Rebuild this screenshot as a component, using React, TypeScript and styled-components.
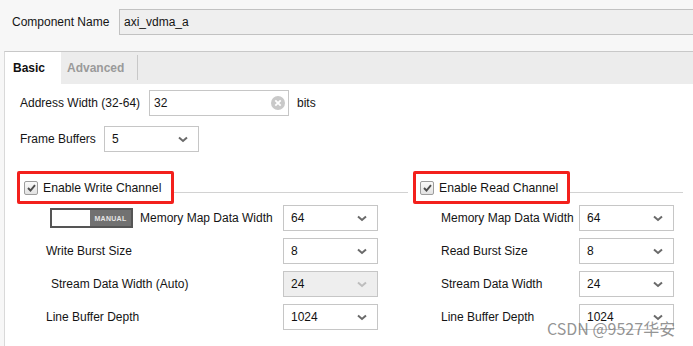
import styled, { createGlobalStyle } from "styled-components";

const GlobalStyle = createGlobalStyle`
  html, body {
    margin: 0;
    padding: 0;
    background: #ffffff;
  }
  body {
    font-family: "Liberation Sans", Arial, sans-serif;
    font-size: 12px;
    color: #141414;
  }
  * {
    box-sizing: border-box;
  }
`;

const Chevron = ({ disabled }: { disabled?: boolean }) => (
  <svg width="10" height="7" viewBox="0 0 10 7">
    <path
      d="M1 1.5 L5 5 L9 1.5"
      fill="none"
      stroke={disabled ? "#bdbdbd" : "#6a6a6a"}
      strokeWidth="2"
    />
  </svg>
);

const ClearIcon = () => (
  <svg width="14" height="14" viewBox="0 0 14 14">
    <circle cx="7" cy="7" r="7" fill="#c9c9c9" />
    <path d="M4.3 4.3 L9.7 9.7 M9.7 4.3 L4.3 9.7" stroke="#fff" strokeWidth="1.8" />
  </svg>
);

const CheckIcon = () => (
  <svg width="9" height="8" viewBox="0 0 9 8">
    <path d="M1 4 L3.5 6.5 L8 1.2" fill="none" stroke="#4d4d4d" strokeWidth="1.9" />
  </svg>
);

const writeRows = [
  { label: "Memory Map Data Width", value: "64", manual: true },
  { label: "Write Burst Size", value: "8" },
  { label: "Stream Data Width (Auto)", value: "24", disabled: true, indent: 5 },
  { label: "Line Buffer Depth", value: "1024" },
];

const readRows = [
  { label: "Memory Map Data Width", value: "64" },
  { label: "Read Burst Size", value: "8" },
  { label: "Stream Data Width", value: "24" },
  { label: "Line Buffer Depth", value: "1024" },
];

type RowData = {
  label: string;
  value: string;
  manual?: boolean;
  disabled?: boolean;
  indent?: number;
};

const Select = ({ value, disabled, width }: { value: string; disabled?: boolean; width: number }) => (
  <SelectBox $disabled={disabled} $width={width}>
    <span>{value}</span>
    <Chevron disabled={disabled} />
  </SelectBox>
);

const ChannelGroup = ({
  title,
  rows,
  indent,
  labelWidth,
}: {
  title: string;
  rows: RowData[];
  indent: number;
  labelWidth: number;
}) => (
  <Group>
    <GroupHeader>
      <Annotated>
        <CheckBox>
          <CheckIcon />
        </CheckBox>
        <GroupTitle>{title}</GroupTitle>
      </Annotated>
      <Rule />
    </GroupHeader>
    <Rows>
      {rows.map((row) => (
        <Row key={row.label} $indent={indent}>
          <RowLabel $width={labelWidth} $offset={row.manual ? 4 : row.indent ?? 0}>
            {row.manual && (
              <ManualToggle>
                <ToggleOff />
                <ToggleOn>MANUAL</ToggleOn>
              </ManualToggle>
            )}
            {row.label}
          </RowLabel>
          <Select value={row.value} disabled={row.disabled} width={95} />
        </Row>
      ))}
    </Rows>
  </Group>
);

const App = () => {
  return (
    <>
      <GlobalStyle />
      <Page>
        <NameBar>
          <NameLabel>Component Name</NameLabel>
          <NameField>axi_vdma_a</NameField>
        </NameBar>
        <Panel>
          <TabStrip>
            <Tab $active>Basic</Tab>
            <Tab>Advanced</Tab>
          </TabStrip>
          <Content>
            <FieldRow>
              <FieldLabel $width={129}>Address Width (32-64)</FieldLabel>
              <TextInput>
                <span>32</span>
                <ClearIcon />
              </TextInput>
              <Unit>bits</Unit>
            </FieldRow>
            <FieldRow $gap={10}>
              <FieldLabel $width={84}>Frame Buffers</FieldLabel>
              <Select value="5" width={95} />
            </FieldRow>
            <Groups>
              <ChannelGroup title="Enable Write Channel" rows={writeRows} indent={29} labelWidth={237} />
              <ChannelGroup title="Enable Read Channel" rows={readRows} indent={28} labelWidth={138} />
            </Groups>
          </Content>
          <Watermark>CSDN @9527华安</Watermark>
        </Panel>
      </Page>
    </>
  );
};

const Page = styled.div`
  width: 693px;
  height: 346px;
  overflow: hidden;
  background: #f7f7f7;
  display: flex;
  flex-direction: column;
`;

const NameBar = styled.div`
  height: 51px;
  padding: 9px 0 0 12px;
  display: flex;
  align-items: flex-start;
`;

const NameLabel = styled.div`
  width: 107px;
  line-height: 26px;
`;

const NameField = styled.div`
  flex: 1;
  height: 26px;
  line-height: 24px;
  padding-left: 4px;
  background: #efefef;
  border: 1px solid #c2c2c2;
  border-right: none;
`;

const Panel = styled.div`
  position: relative;
  flex: 1;
  margin-left: 4px;
  background: #ffffff;
  border-top: 1px solid #c8c8c8;
  border-left: 1px solid #d9d9d9;
`;

const TabStrip = styled.div`
  height: 32px;
  display: flex;
  background: #ececec;
`;

const Tab = styled.div<{ $active?: boolean }>`
  position: relative;
  width: ${({ $active }) => ($active ? "56px" : "77px")};
  padding-left: ${({ $active }) => ($active ? "8px" : "6px")};
  line-height: 32px;
  font-weight: bold;
  color: ${({ $active }) => ($active ? "#111" : "#9a9a9a")};
  background: ${({ $active }) => ($active ? "#ffffff" : "transparent")};

  &::after {
    content: "";
    display: ${({ $active }) => ($active ? "none" : "block")};
    position: absolute;
    right: 0;
    top: 3px;
    bottom: 4px;
    width: 1px;
    background: #c8c8c8;
  }
`;

const Content = styled.div`
  padding: 6px 5px 0 15px;
`;

const FieldRow = styled.div<{ $gap?: number }>`
  display: flex;
  align-items: center;
  height: 26px;
  margin-top: ${({ $gap }) => $gap ?? 0}px;
`;

const FieldLabel = styled.div<{ $width: number }>`
  width: ${({ $width }) => $width}px;
  flex-shrink: 0;
  white-space: nowrap;
`;

const TextInput = styled.div`
  width: 140px;
  height: 26px;
  padding: 0 3px 0 4px;
  display: flex;
  align-items: center;
  justify-content: space-between;
  border: 1px solid #c6c6c6;
  background: #fff;
`;

const Unit = styled.span`
  margin-left: 8px;
`;

const SelectBox = styled.div<{ $disabled?: boolean; $width: number }>`
  width: ${({ $width }) => $width}px;
  height: 26px;
  flex-shrink: 0;
  padding: 0 10px 0 7px;
  display: flex;
  align-items: center;
  justify-content: space-between;
  border: 1px solid #c6c6c6;
  background: ${({ $disabled }) => ($disabled ? "#eeeeee" : "#ffffff")};
  color: #111;
`;

const Groups = styled.div`
  display: grid;
  grid-template-columns: 396px 1fr;
  margin: 19px 0 0 -3px;
`;

const Group = styled.div`
  display: flex;
  flex-direction: column;
`;

const GroupHeader = styled.div`
  display: flex;
  align-items: flex-start;
  height: 33px;
`;

const Annotated = styled.div`
  height: 33px;
  width: 157px;
  flex-shrink: 0;
  padding-left: 4px;
  display: flex;
  align-items: center;
  gap: 5px;
  border: 3px solid #f3201c;
  border-radius: 2px;
`;

const CheckBox = styled.div`
  width: 14px;
  height: 14px;
  display: flex;
  align-items: center;
  justify-content: center;
  border: 1px solid #9d9d9d;
  border-radius: 2px;
  background: linear-gradient(#fafafa, #e2e2e2);
`;

const GroupTitle = styled.span`
  white-space: nowrap;
  font-size: 12.2px;
`;

const Rule = styled.div`
  flex: 1;
  height: 1px;
  margin: 21px 5px 0 0;
  background: #d2d2d2;
`;

const Rows = styled.div`
  display: flex;
  flex-direction: column;
  gap: 7px;
  padding-top: 1px;
`;

const Row = styled.div<{ $indent: number }>`
  display: flex;
  align-items: center;
  padding-left: ${({ $indent }) => $indent}px;
`;

const RowLabel = styled.div<{ $width: number; $offset: number }>`
  width: ${({ $width }) => $width}px;
  padding-left: ${({ $offset }) => $offset}px;
  flex-shrink: 0;
  display: flex;
  align-items: center;
  gap: 7px;
  white-space: nowrap;
`;

const ManualToggle = styled.div`
  width: 83px;
  height: 20px;
  display: flex;
  border: 2px solid #555;
`;

const ToggleOff = styled.div`
  flex: 1;
  background: #fff;
`;

const ToggleOn = styled.div`
  width: 41px;
  display: flex;
  align-items: center;
  justify-content: center;
  background: #717171;
  color: #e6e6e6;
  font-size: 7px;
  font-weight: bold;
  letter-spacing: 0.3px;
`;

const Watermark = styled.div`
  position: absolute;
  left: 542px;
  top: 264px;
  font-family: "Noto Sans CJK SC", "Liberation Sans", sans-serif;
  font-size: 16px;
  color: rgba(120, 120, 120, 0.8);
  white-space: nowrap;
  pointer-events: none;
`;

export default App;
